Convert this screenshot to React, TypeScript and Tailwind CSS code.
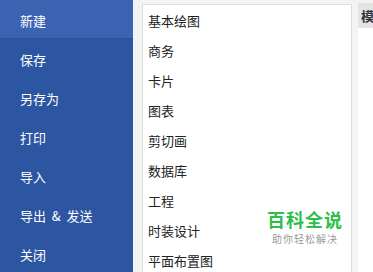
import React from 'react';

const MENU = ['新建', '保存', '另存为', '打印', '导入', '导出\u00a0 &\u00a0 发送', '关闭'];
const CATEGORIES = ['基本绘图', '商务', '卡片', '图表', '剪切画', '数据库', '工程', '时装设计', '平面布置图'];

const App: React.FC = () => {
  return (
    <div
      className="w-[373px] h-[272px] overflow-hidden flex bg-[#f3f3f3]"
      style={{ fontFamily: '"Microsoft YaHei", "Noto Sans CJK SC", sans-serif' }}
    >
      {/* Backstage sidebar */}
      <div className="w-[133px] shrink-0 bg-[#2d56a2] flex flex-col">
        {MENU.map((item, i) => (
          <div
            key={item}
            className={`h-[39px] shrink-0 flex items-center pl-5 pt-[3px] text-[13px] text-white whitespace-pre ${
              i === 0 ? 'bg-[#3a63b1] border-b border-[#2a4f96]' : ''
            }`}
          >
            {item}
          </div>
        ))}
      </div>

      {/* Template categories */}
      <div className="ml-[9px] mt-[4px] w-[210px] shrink-0 h-[280px] bg-white border border-[#dcdcdc] relative">
        <div className="flex flex-col pt-[1px]">
          {CATEGORIES.map((c) => (
            <div key={c} className="h-[30px] flex items-center pl-[5px] text-[13px] text-[#222]">
              {c}
            </div>
          ))}
        </div>

        {/* watermark */}
        <div className="absolute left-[124px] top-[204px] flex flex-col items-center gap-[2px]">
          <span className="text-[18px] leading-[21px] font-bold text-[#2bbf4a] tracking-[1px]">百科全说</span>
          <span className="text-[10px] leading-[13px] text-[#9a9a9a] tracking-[1px]">助你轻松解决</span>
        </div>
      </div>

      {/* Right preview panel */}
      <div className="ml-[6px] mt-[3px] flex-1 flex flex-col">
        <div className="h-[25px] bg-[#e4e4e4] flex items-center pl-[3px] text-[13px] font-bold text-[#333] whitespace-nowrap overflow-hidden">
          模板
        </div>
        <div className="flex-1 bg-white" />
      </div>
    </div>
  );
};

export default App;
